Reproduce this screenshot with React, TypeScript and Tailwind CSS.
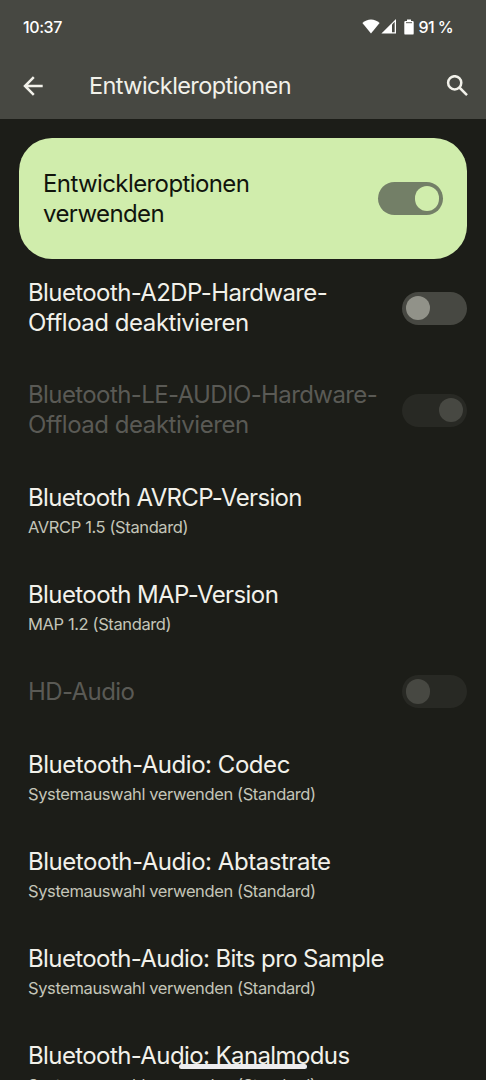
import clsx from "clsx";

type Option = {
  title: string[];
  tracking: string;
  summary?: string;
  toggle?: "on" | "off";
  disabled?: boolean;
};

const options: Option[] = [
  { title: ["Bluetooth-A2DP-Hardware-", "Offload deaktivieren"], tracking: "tracking-[-0.6px] last:tracking-[-0.46px]", toggle: "off" },
  { title: ["Bluetooth-LE-AUDIO-Hardware-", "Offload deaktivieren"], tracking: "tracking-[-0.6px] last:tracking-[-0.46px]", toggle: "on", disabled: true },
  { title: ["Bluetooth AVRCP-Version"], tracking: "tracking-[-0.65px]", summary: "AVRCP 1.5 (Standard)" },
  { title: ["Bluetooth MAP-Version"], tracking: "tracking-[-0.59px]", summary: "MAP 1.2 (Standard)" },
  { title: ["HD-Audio"], tracking: "tracking-[-0.6px]", toggle: "off", disabled: true },
  { title: ["Bluetooth-Audio: Codec"], tracking: "tracking-[-0.46px]", summary: "Systemauswahl verwenden (Standard)" },
  { title: ["Bluetooth-Audio: Abtastrate"], tracking: "tracking-[-0.46px]", summary: "Systemauswahl verwenden (Standard)" },
  { title: ["Bluetooth-Audio: Bits pro Sample"], tracking: "tracking-[-0.6px]", summary: "Systemauswahl verwenden (Standard)" },
  { title: ["Bluetooth-Audio: Kanalmodus"], tracking: "tracking-[-0.6px]", summary: "Systemauswahl verwenden (Standard)" },
];

const Toggle = ({ on, track, thumb }: { on: boolean; track: string; thumb: string }) => {
  return (
    <div className={clsx("flex h-[33px] w-[65.5px] shrink-0 items-center rounded-full px-1", track, on && "justify-end")}>
      <div className={clsx("size-[24.5px] rounded-full", thumb)} />
    </div>
  );
};

const StatusBar = () => {
  return (
    <div className="flex h-[53px] items-center justify-between pl-[23px] pr-[33px] text-[16px] font-medium text-white">
      <span className="tracking-[-0.4px]">10:37</span>
      <div className="flex items-center">
        <svg width="18" height="15" viewBox="0 0 18 15" fill="currentColor">
          <path d="M0.4 4.1C5.1-.8 12.9-.8 17.6 4.1L9 14.6Z" />
        </svg>
        <svg className="ml-[1px]" width="16" height="15" viewBox="0 0 16 15">
          <path d="M0.4 14.6 15 0V14.6Z" fill="currentColor" />
          <path d="M11 5.4 13.7 2.7V13.3H11Z" fill="#474842" />
        </svg>
        <svg className="ml-[7px]" width="10" height="16" viewBox="0 0 10 16" fill="currentColor">
          <path d="M3 0.4H7V2H8.5Q9.7 2 9.7 3.2V14.4Q9.7 15.6 8.500 15.6H1.5Q0.3 15.6 0.3 14.4V3.2Q0.3 2 1.5 2H3Z" />
          <path d="M2 3.7H8" stroke="#474842" strokeWidth="0.9" />
        </svg>
        <span className="ml-[5px] tracking-[-0.6px]">91 %</span>
      </div>
    </div>
  );
};

const AppBar = () => {
  return (
    <div className="flex h-[66px] items-center pl-[23px] pr-[18px] text-[#f2f1ea]">
      <svg width="20" height="20" viewBox="0 0 20 20" fill="none" stroke="currentColor" strokeWidth="2.5">
        <path d="M19.7 10H2.500M10.800 1.200 2 10 10.800 18.800" />
      </svg>
      <h1 className="ml-[46px] flex-1 text-[23.5px] tracking-[-0.59px]">Entwickleroptionen</h1>
      <svg width="22" height="22" viewBox="0 0 22 22" fill="none" stroke="currentColor" strokeWidth="2.5">
        <circle cx="8.7" cy="7.8" r="6.6" />
        <path d="M13.400 12.500 21 20.100" />
      </svg>
    </div>
  );
};

const OptionRow = ({ option }: { option: Option }) => {
  const { title, tracking, summary, toggle, disabled } = option;
  return (
    <div
      className={clsx(
        "flex shrink-0 items-center justify-between pl-7 pr-[19px]",
        summary ? "h-[97px]" : title.length > 1 ? "h-[102px]" : "h-[73px]",
      )}
    >
      <div className={clsx(summary && "pt-0.5")}>
        {title.map((line) => (
          <div
            key={line}
            className={clsx("whitespace-nowrap text-[24px] leading-[30px]", tracking, disabled ? "text-[#5a5a55]" : "text-[#f2f1ea]")}
          >
            {line}
          </div>
        ))}
        {summary && (
          <div className="-mb-1 whitespace-nowrap text-[16.5px] leading-[29px] tracking-[-0.39px] text-[#c4c5b8]">{summary}</div>
        )}
      </div>
      {toggle && (
        <Toggle
          on={toggle === "on"}
          track={disabled ? "bg-[#282924]" : "bg-[#474842]"}
          thumb={disabled ? "bg-[#474842]" : "bg-[#919289]"}
        />
      )}
    </div>
  );
};

export default function App() {
  return (
    <div className="relative flex h-[1080px] w-[486px] flex-col overflow-hidden bg-[#1c1d18] font-['Inter',sans-serif]">
      <header className="h-[119px] shrink-0 bg-[#474842]">
        <StatusBar />
        <AppBar />
      </header>
      <main className="flex flex-col">
        <div className="mx-[19px] mt-[19px] flex h-[121px] shrink-0 items-center justify-between rounded-[33px] bg-[#d0edac] px-6">
          <div className="text-[24px] leading-[30px] tracking-[-0.6px] text-[#11140c]">
            Entwickleroptionen
            <br />
            verwenden
          </div>
          <Toggle on track="bg-[#737f67]" thumb="bg-[#d0edac]" />
        </div>
        <div className="-mt-0.5 flex flex-col">
          {options.map((option) => (
            <OptionRow key={option.title[0]} option={option} />
          ))}
        </div>
      </main>
      {/* gesture handle */}
      <div className="absolute bottom-[11.5px] left-[179px] h-[5px] w-32 rounded-full bg-[#edecee]" />
    </div>
  );
}
